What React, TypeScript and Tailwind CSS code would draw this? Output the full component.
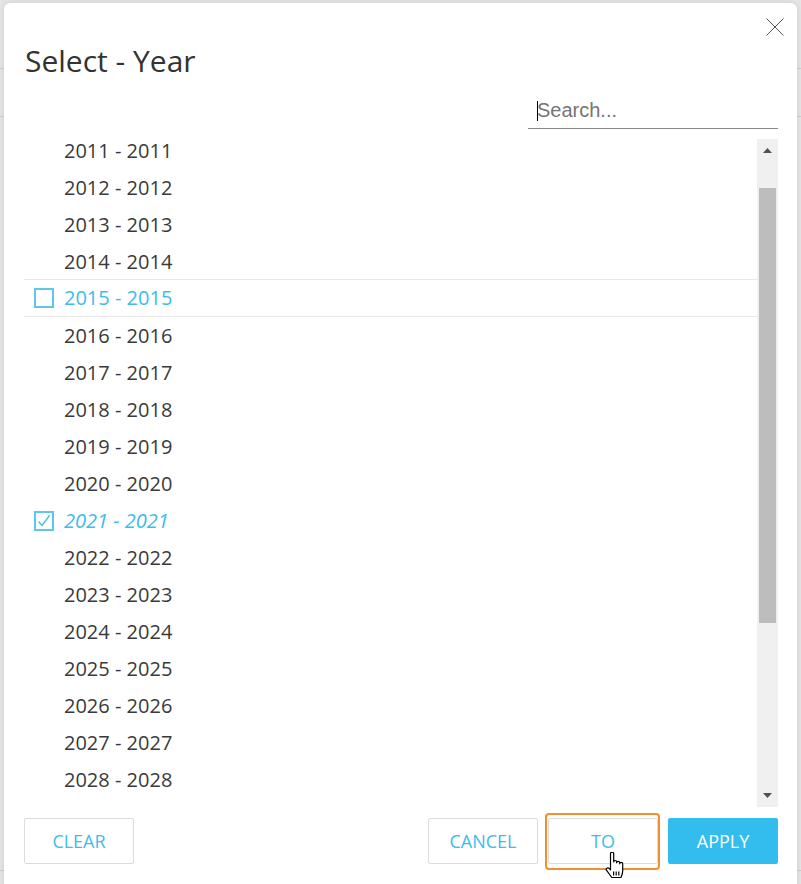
import React from 'react';

const years = Array.from({ length: 18 }, (_, i) => 2011 + i);

const Checkbox: React.FC<{ checked?: boolean }> = ({ checked }) => (
  <span className="w-[20px] h-[20px] border-2 border-[#5cc6ee] flex items-center justify-center shrink-0 box-border">
    {checked && (
      <svg width="16" height="16" viewBox="0 0 16 16" fill="none">
        <path d="M2.5 8.5 L6 12.5 L13.5 2.5" stroke="#3dbde9" strokeWidth="1.3" />
      </svg>
    )}
  </span>
);

const HandCursor: React.FC = () => (
  <svg width="22" height="28" viewBox="0 0 22 28" fill="none">
    <path
      d="M6.5 1.8a1.6 1.6 0 0 1 3.2 0V10a1.5 1.5 0 0 1 3 0v.8a1.5 1.5 0 0 1 3 0v1a1.5 1.5 0 0 1 3 0V19c0 2.8-1.2 5-1.8 6.5H7.8L2.6 18.4a1.6 1.6 0 0 1 2.4-2.1l1.5 1.6Z"
      fill="white"
      stroke="black"
      strokeWidth="1.2"
      strokeLinejoin="round"
    />
    <path d="M9.6 19.5v4M12.2 19.5v4M14.8 19.5v4" stroke="black" strokeWidth="1.2" />
  </svg>
);

const App: React.FC = () => {
  return (
    <div className="relative w-[801px] h-[884px] overflow-hidden bg-[#e6e6e6] font-['Open_Sans',sans-serif]">
      {/* page behind the modal */}
      <div className="h-[69px] border-b border-[#cfcfcf]" />
      <div className="h-[48px] border-b border-[#cfcfcf]" />
      <div className="h-[754px] border-b border-[#cfcfcf]" />

      {/* Modal */}
      <div className="absolute top-[3px] left-[4px] w-[793px] h-[920px] bg-white rounded-[6px] shadow-[0_0_6px_rgba(0,0,0,0.12)] pt-[38px] pl-[20px] pr-[19px]">
        <button className="absolute top-[15px] left-[762px] w-[18px] h-[18px]">
          <svg width="18" height="18" viewBox="0 0 18 18">
            <path d="M0.5 0.5 L17.5 17.5 M17.5 0.5 L0.5 17.5" stroke="#555" strokeWidth="1" />
          </svg>
        </button>

        <h1 className="pl-px text-[30px] leading-[40px] text-[#333] font-normal">Select - Year</h1>

        <div className="flex justify-end mt-[11px]">
          <div className="relative w-[250px]">
            <input
              className="w-full h-[37px] border-b border-[#8a8a8a] pl-[9px] text-[20px] font-['Liberation_Sans',Arial,sans-serif] text-[#333] placeholder:text-[#757575] outline-none"
              placeholder="Search..."
            />
            <span className="absolute left-[9px] top-[9px] w-px h-[20px] bg-black" />
          </div>
        </div>

        {/* List */}
        <div className="flex mt-[3px] h-[675px]">
          <div className="flex-1 overflow-hidden">
            {years.map((y) => {
              const hovered = y === 2015;
              const checked = y === 2021;
              return (
                <div
                  key={y}
                  className={`flex items-center text-[20px] box-border ${
                    hovered
                      ? 'h-[38px] -mt-px border-y border-[#e8e8e8] text-[#3dbde9]'
                      : checked
                      ? 'h-[37px] text-[#3dbde9] italic'
                      : 'h-[37px] text-[#3a3a3a]'
                  } ${hovered || checked ? 'pl-[10px]' : 'pl-[40px]'}`}
                >
                  {(hovered || checked) && (
                    <span className="mr-[10px]">
                      <Checkbox checked={checked} />
                    </span>
                  )}
                  <span>
                    {y} - {y}
                  </span>
                </div>
              );
            })}
          </div>

          {/* Scrollbar */}
          <div className="w-[21px] mt-[7px] bg-[#f0f0f0] flex flex-col items-center">
            <div className="h-[49px] w-full flex justify-center pt-[9px]">
              <svg width="9" height="5" viewBox="0 0 9 5">
                <path d="M4.5 0 L9 5 L0 5Z" fill="#505050" />
              </svg>
            </div>
            <div className="w-[17px] h-[435px] bg-[#bdbdbd]" />
            <div className="flex-1 w-full flex items-end justify-center pb-[9px]">
              <svg width="9" height="5" viewBox="0 0 9 5">
                <path d="M0 0 L9 0 L4.5 5Z" fill="#505050" />
              </svg>
            </div>
          </div>
        </div>

        {/* Footer buttons */}
        <div className="flex items-center mt-[11px]">
          <button className="w-[110px] h-[46px] border border-[#dcdcdc] rounded-[2px] text-[18px] text-[#3dbde9]">
            CLEAR
          </button>
          <div className="flex-1" />
          <div className="flex gap-[10px]">
            <button className="w-[110px] h-[46px] border border-[#dcdcdc] rounded-[2px] text-[18px] text-[#3dbde9]">
              CANCEL
            </button>
            <button className="relative w-[110px] h-[46px] border border-[#dcdcdc] rounded-[2px] text-[18px] text-[#3dbde9]">
              TO
              <span className="absolute -left-[4px] -right-[3px] -top-[6px] -bottom-[7px] border-2 border-[#f0902f] rounded-[4px]" />
              <span className="absolute left-[55px] top-[33px]">
                <HandCursor />
              </span>
            </button>
            <button className="w-[110px] h-[46px] rounded-[2px] bg-[#33bdef] text-[18px] text-white">
              APPLY
            </button>
          </div>
        </div>
      </div>
    </div>
  );
};

export default App;
